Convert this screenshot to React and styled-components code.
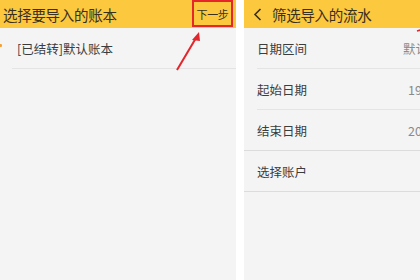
import React from "react";
import styled, { createGlobalStyle } from "styled-components";

const Global = createGlobalStyle`
  html, body {
    margin: 0;
    padding: 0;
    background: #ffffff;
  }
  body {
    font-family: "Noto Sans CJK SC", "Noto Sans", sans-serif;
  }
`;

const Page = styled.div`
  display: flex;
  gap: 8px;
  width: 420px;
  height: 280px;
  overflow: hidden;
  background: #ffffff;
`;

const Screen = styled.div`
  position: relative;
  display: flex;
  flex-direction: column;
  width: ${(p) => p.width || "auto"};
  flex: ${(p) => (p.width ? "none" : "1")};
  background: #f4f4f4;
  overflow: hidden;
`;

const Header = styled.div`
  display: flex;
  align-items: center;
  height: 28px;
  padding-left: ${(p) => p.pad || "3px"};
  background: #fbc83e;
  color: #3a3020;
  font-size: 14.5px;
  letter-spacing: -0.3px;
  flex: none;
`;

const Title = styled.span`
  flex: 1;
  white-space: nowrap;
`;

const Back = styled.svg`
  width: 9px;
  height: 13px;
  margin-right: 10px;
  flex: none;
`;

const NextButton = styled.div`
  display: flex;
  align-items: center;
  justify-content: center;
  width: 41px;
  height: 27px;
  margin-right: 3px;
  margin-top: -1px;
  border: 2px solid #e5262a;
  box-sizing: border-box;
  font-size: 11px;
  color: #3a3020;
`;

const List = styled.div`
  display: flex;
  flex-direction: column;
`;

const Row = styled.div`
  position: relative;
  display: flex;
  align-items: center;
  height: 41px;
  padding-left: ${(p) => p.pad || "13px"};
  box-sizing: border-box;
  font-size: 12.5px;
  color: #3c3c3c;
  white-space: nowrap;

  &::after {
    content: "";
    position: absolute;
    left: ${(p) => (p.full ? "0" : p.lineLeft || "13px")};
    right: 0;
    bottom: 0;
    height: 1px;
    background: ${(p) => (p.full ? "#dcdcdc" : "#e4e4e4")};
  }
`;

const Label = styled.span`
  flex: 1;
`;

const Value = styled.span`
  color: #8a8a8a;
  font-size: 12.5px;
  margin-right: ${(p) => p.cut || 0}px;
`;

const CheckMark = styled.span`
  position: absolute;
  left: -2px;
  top: 16px;
  width: 4px;
  height: 3px;
  background: #f3a23b;
  border-radius: 1px;
`;

const Arrow = styled.svg`
  position: absolute;
  left: ${(p) => p.x}px;
  top: ${(p) => p.y}px;
  overflow: visible;
  pointer-events: none;
`;

export default function App() {
  return (
    <>
      <Global />
      <Page>
        <Screen width="236px">
          <Header>
            <Title>选择要导入的账本</Title>
            <NextButton>下一步</NextButton>
          </Header>
          <List>
            <Row pad="17px" lineLeft="12px">
              <CheckMark />
              [已结转]默认账本
            </Row>
          </List>
          <Arrow x={170} y={28} width="40" height="50">
            <line x1="7" y1="42" x2="26" y2="10" stroke="#e3262c" strokeWidth="2" />
            <polygon points="29,4 22,12 30,13" fill="#e3262c" />
          </Arrow>
        </Screen>
        <Screen>
          <Header pad="9px">
            <Back viewBox="0 0 9 13">
              <path d="M7.5 1 L2 6.5 L7.5 12" fill="none" stroke="#3a3020" strokeWidth="1.6" />
            </Back>
            <Title>筛选导入的流水</Title>
          </Header>
          <List>
            <Row>
              <Label>日期区间</Label>
              <Value cut={-8}>默认</Value>
            </Row>
            <Row>
              <Label>起始日期</Label>
              <Value cut={-2}>19</Value>
            </Row>
            <Row full>
              <Label>结束日期</Label>
              <Value cut={-2}>20</Value>
            </Row>
            <Row full>
              <Label>选择账户</Label>
            </Row>
          </List>
          <Arrow x={172} y={28} width="10" height="6">
            <line x1="1" y1="3" x2="6" y2="1.5" stroke="#e3262c" strokeWidth="1.5" />
          </Arrow>
        </Screen>
      </Page>
    </>
  );
}
